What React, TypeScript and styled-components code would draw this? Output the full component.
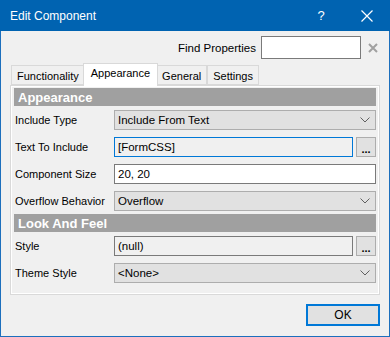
import React from "react";
import styled, { createGlobalStyle } from "styled-components";

const GlobalStyle = createGlobalStyle`
  html, body { margin: 0; padding: 0; background: #f0f0f0; }
  * { box-sizing: border-box; }
`;

const FONT = `"Segoe UI", "Liberation Sans", Arial, sans-serif`;

const Window = styled.div`
  width: 390px;
  height: 337px;
  border: 1px solid #1c6fbd;
  border-top: none;
  background: #f0f0f0;
  font-family: ${FONT};
  font-size: 11px;
  color: #000;
  display: flex;
  flex-direction: column;
`;

const TitleBar = styled.div`
  height: 31px;
  margin: 0 -1px;
  background: #0063b1;
  color: #fff;
  display: flex;
  align-items: center;
  padding-left: 10px;
  font-size: 12px;
`;

const Title = styled.div`
  flex: 1;
`;

const TitleButton = styled.div`
  width: 46px;
  height: 31px;
  display: flex;
  align-items: center;
  justify-content: center;
  font-size: 13px;
`;

const Body = styled.div`
  flex: 1;
  display: flex;
  flex-direction: column;
  padding: 5px 9px 0 8px;
`;

const FindRow = styled.div`
  display: flex;
  justify-content: flex-end;
  align-items: center;
  height: 23px;
  padding-right: 2px;
`;

const FindLabel = styled.span`
  font-size: 11.5px;
  margin-right: 5px;
`;

const FindInput = styled.div`
  width: 100px;
  height: 23px;
  background: #fff;
  border: 1px solid #7a7a7a;
`;

const ClearIcon = styled.div`
  width: 17px;
  display: flex;
  justify-content: flex-end;
`;

const TabStrip = styled.div`
  display: flex;
  align-items: flex-end;
  height: 22px;
  margin-top: 4px;
  padding-left: 2px;
  position: relative;
  z-index: 1;
`;

const Tab = styled.div<{ $active?: boolean }>`
  height: ${(p) => (p.$active ? 23 : 20)}px;
  padding: 0 ${(p) => (p.$active ? 7 : 5)}px;
  margin-bottom: ${(p) => (p.$active ? -1 : 0)}px;
  margin-left: ${(p) => (p.$active ? -2 : 0)}px;
  margin-right: ${(p) => (p.$active ? -2 : 0)}px;
  display: flex;
  align-items: ${(p) => (p.$active ? "flex-start" : "center")};
  padding-top: ${(p) => (p.$active ? 3 : 1)}px;
  background: ${(p) => (p.$active ? "#fff" : "#f0f0f0")};
  border: 1px solid #d9d9d9;
  border-bottom: ${(p) => (p.$active ? "none" : "1px solid #d9d9d9")};
  position: relative;
  z-index: ${(p) => (p.$active ? 2 : 1)};
  & + & {
    border-left: ${(p) => (p.$active ? "1px solid #d9d9d9" : "none")};
  }
`;

const Panel = styled.div`
  width: 370px;
  height: 210px;
  margin-left: 1px;
  border: 1px solid #d9d9d9;
  box-shadow: inset 0 0 0 1px #fff;
  padding: 2px 3px;
  display: flex;
  flex-direction: column;
`;

const SectionHeader = styled.div`
  height: 18px;
  background: #a0a0a0;
  color: #fff;
  font-weight: bold;
  font-size: 13px;
  display: flex;
  align-items: center;
  padding-left: 4px;
`;

const Row = styled.div`
  height: 27px;
  display: flex;
  align-items: center;
`;

const Label = styled.div`
  width: 100px;
  padding-left: 1px;
`;

const Field = styled.div<{ $variant: "combo" | "focus" | "white" | "readonly" }>`
  flex: 1;
  height: 20px;
  display: flex;
  align-items: center;
  padding: 0 0 0 3px;
  background: ${(p) =>
    p.$variant === "combo" ? "#e1e1e1" : p.$variant === "white" ? "#fff" : "#f0f0f0"};
  border: 1px solid
    ${(p) =>
      p.$variant === "combo" ? "#adadad" : p.$variant === "focus" ? "#0078d7" : "#7a7a7a"};
`;

const FieldText = styled.div`
  flex: 1;
  font-size: 11.5px;
`;

const Chevron = styled.div`
  width: 20px;
  display: flex;
  justify-content: center;
`;

const EllipsisButton = styled.div`
  width: 20px;
  height: 20px;
  margin-left: 3px;
  background: #e1e1e1;
  border: 1px solid #adadad;
  display: flex;
  align-items: flex-end;
  justify-content: center;
  font-weight: bold;
  font-size: 11px;
  line-height: 14px;
`;

const Footer = styled.div`
  display: flex;
  justify-content: flex-end;
  padding-top: 9px;
`;

const OkButton = styled.div`
  width: 74px;
  height: 22px;
  border: 2px solid #0078d7;
  background: #e1e1e1;
  display: flex;
  align-items: center;
  justify-content: center;
  font-size: 12px;
`;

const ChevronIcon = () => (
  <svg width="10" height="6" viewBox="0 0 10 6">
    <path d="M0.5 0.5 L5 5 L9.5 0.5" fill="none" stroke="#606060" strokeWidth="1" />
  </svg>
);

const Combo = ({ text }: { text: string }) => (
  <Field $variant="combo">
    <FieldText>{text}</FieldText>
    <Chevron>
      <ChevronIcon />
    </Chevron>
  </Field>
);

export default function App() {
  return (
    <>
      <GlobalStyle />
      <Window>
        <TitleBar>
          <Title>Edit Component</Title>
          <TitleButton>?</TitleButton>
          <TitleButton>
            <svg width="12" height="12" viewBox="0 0 12 12">
              <path d="M0.5 0.5 L11.5 11.5 M11.5 0.5 L0.5 11.5" stroke="#fff" strokeWidth="1.2" />
            </svg>
          </TitleButton>
        </TitleBar>
        <Body>
          <FindRow>
            <FindLabel>Find Properties</FindLabel>
            <FindInput />
            <ClearIcon>
              <svg width="10" height="10" viewBox="0 0 10 10">
                <path d="M1 1 L9 9 M9 1 L1 9" stroke="#a0a0a0" strokeWidth="2" />
              </svg>
            </ClearIcon>
          </FindRow>
          <TabStrip>
            <Tab>Functionality</Tab>
            <Tab $active>Appearance</Tab>
            <Tab>General</Tab>
            <Tab>Settings</Tab>
          </TabStrip>
          <Panel>
            <SectionHeader>Appearance</SectionHeader>
            <Row>
              <Label>Include Type</Label>
              <Combo text="Include From Text" />
            </Row>
            <Row>
              <Label>Text To Include</Label>
              <Field $variant="focus">
                <FieldText>[FormCSS]</FieldText>
              </Field>
              <EllipsisButton>...</EllipsisButton>
            </Row>
            <Row>
              <Label>Component Size</Label>
              <Field $variant="white">
                <FieldText>20, 20</FieldText>
              </Field>
            </Row>
            <Row>
              <Label>Overflow Behavior</Label>
              <Combo text="Overflow" />
            </Row>
            <SectionHeader>Look And Feel</SectionHeader>
            <Row>
              <Label>Style</Label>
              <Field $variant="readonly">
                <FieldText>(null)</FieldText>
              </Field>
              <EllipsisButton>...</EllipsisButton>
            </Row>
            <Row>
              <Label>Theme Style</Label>
              <Combo text="<None>" />
            </Row>
          </Panel>
          <Footer>
            <OkButton>OK</OkButton>
          </Footer>
        </Body>
      </Window>
    </>
  );
}
